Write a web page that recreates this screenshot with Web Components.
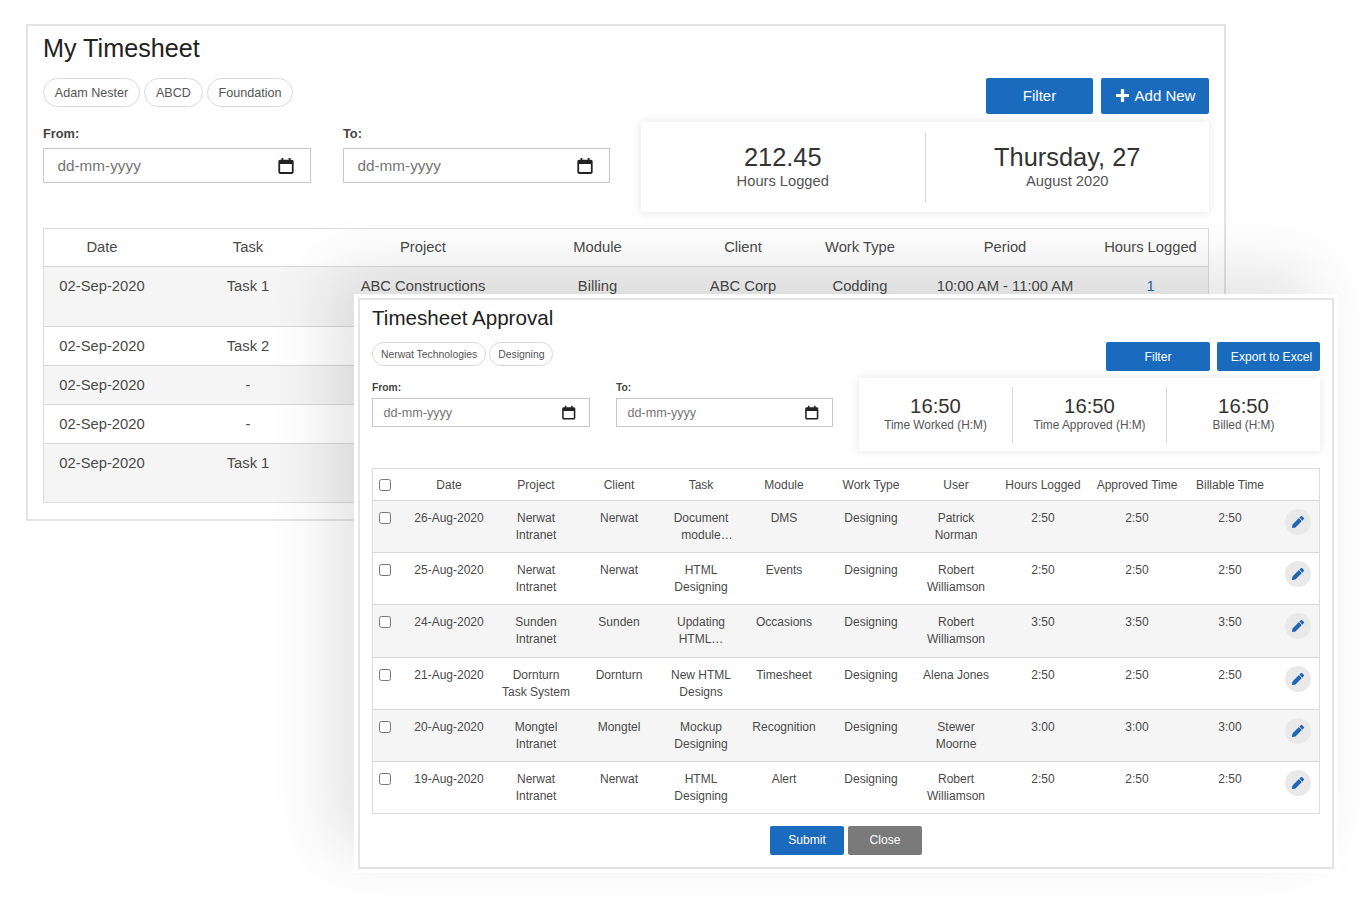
<!DOCTYPE html>
<html lang="en"><head><meta charset="utf-8"><title>Timesheet</title>
<style>
html,body{margin:0;padding:0;background:#fff}
body{width:1366px;height:900px;overflow:hidden;position:relative;font-family:"Liberation Sans",Arial,sans-serif;color:#444}
</style></head><body>

<ts-window style="left:26px;top:24px;width:1200px;height:497px;--pad:15px;--title:25.2px;--title-h:44px;--title-mb:8px;--bw:2px">
  <span slot="title">My Timesheet</span>
  <ts-panel-top style="--right:568px;--mb:16px">
    <ts-chips slot="left" style="--chip-h:29px;--chip-fs:12.6px;--chip-px:10.8px;--gap:4px;--chip-t:1px">
      <ts-chip>Adam Nester</ts-chip><ts-chip>ABCD</ts-chip><ts-chip>Foundation</ts-chip>
    </ts-chips>
    <ts-dates slot="left" style="--gap:32px;--mt:19px">
      <ts-date label="From:" style="--w:268px;--h:35px;--fs:15.3px;--lfs:12.8px;--lmb:6px;--ip:13.5px;--ic:18px;--ir:15px;--lh:16px"></ts-date>
      <ts-date label="To:" style="--w:267px;--h:35px;--fs:15.3px;--lfs:12.8px;--lmb:6px;--ip:13.5px;--ic:18px;--ir:15px;--lh:16px"></ts-date>
    </ts-dates>
    <ts-actions slot="right" style="--gap:8px;--mb:8px">
      <ts-button style="--w:107px;--h:36px;--fs:15px;--bp:2px">Filter</ts-button>
      <ts-button plus style="--w:108px;--h:36px;--fs:15px;--bp:2px">Add New</ts-button>
    </ts-actions>
    <ts-stats slot="right" style="--h:90px;--div:69px;--num:25.4px;--lab:14.7px;--numh:30px;--labh:18px;--sb:2px">
      <ts-stat value="212.45" label="Hours Logged"></ts-stat>
      <ts-stat value="Thursday, 27" label="August 2020"></ts-stat>
    </ts-stats>
  </ts-panel-top>
  <ts-table set="mine" style="--fs:14.75px;--lh:20px;--pt:9px;--hfs:14.75px"></ts-table>
</ts-window>

<ts-window front style="left:354px;top:294px;width:984px;height:579px;--frame:4px;--pad:12px;--title:20.6px;--title-h:36px;--title-mb:6px;--bw:2px">
  <span slot="title">Timesheet Approval</span>
  <ts-panel-top style="--right:461px;--mb:17px">
    <ts-chips slot="left" style="--chip-h:24px;--chip-fs:10.4px;--chip-px:8px;--gap:3px;--chip-t:1px">
      <ts-chip>Nerwat Technologies</ts-chip><ts-chip>Designing</ts-chip>
    </ts-chips>
    <ts-dates slot="left" style="--gap:26px;--mt:14px">
      <ts-date label="From:" style="--w:218px;--h:29px;--fs:12.6px;--lfs:10.3px;--lmb:2px;--ip:10.5px;--ic:15.5px;--ir:12.5px;--lh:16px"></ts-date>
      <ts-date label="To:" style="--w:217px;--h:29px;--fs:12.6px;--lfs:10.3px;--lmb:2px;--ip:10.5px;--ic:15.5px;--ir:12.5px;--lh:16px"></ts-date>
    </ts-dates>
    <ts-actions slot="right" style="--gap:7px;--mb:7px">
      <ts-button style="--w:104px;--h:29px;--fs:12.1px">Filter</ts-button>
      <ts-button style="--w:103px;--h:29px;--fs:12.1px;--pl:6px">Export to Excel</ts-button>
    </ts-actions>
    <ts-stats slot="right" style="--h:73px;--div:56px;--num:20.3px;--lab:11.85px;--numh:25px;--labh:13px;--sb:4px">
      <ts-stat value="16:50" label="Time Worked (H:M)"></ts-stat>
      <ts-stat value="16:50" label="Time Approved (H:M)"></ts-stat>
      <ts-stat value="16:50" label="Billed (H:M)"></ts-stat>
    </ts-stats>
  </ts-panel-top>
  <ts-table set="approval" style="--fs:12px;--lh:17px;--pt:9px;--hfs:12px;--hp:4px"></ts-table>
  <ts-footer>
    <ts-button style="--w:74px;--h:29px;--fs:12.1px">Submit</ts-button>
    <ts-button muted style="--w:74px;--h:29px;--fs:12.1px">Close</ts-button>
  </ts-footer>
</ts-window>

<script>
const el = (name, css, html, init) => {
  customElements.define(name, class extends HTMLElement {
    constructor(){ super(); this.attachShadow({mode:'open'}).innerHTML = `<style>${css}</style>${html}`; }
    connectedCallback(){ if(init) init(this, this.shadowRoot); }
  });
};

el('ts-window', `
  :host{display:block;position:absolute;box-sizing:border-box;padding:var(--frame,0);background:#fff}
  :host([front]){box-shadow:-24px -24px 60px rgba(0,0,0,.11)}
  .box{box-sizing:border-box;height:100%;border:var(--bw) solid #e4e4e4;padding:0 var(--pad);background:#fff}
  .title{height:var(--title-h);line-height:var(--title-h);margin-bottom:var(--title-mb);font-size:var(--title);color:#222}
`, `<div class="box"><div class="title"><slot name="title"></slot></div><slot></slot></div>`);

el('ts-panel-top', `
  :host{display:flex;justify-content:space-between;align-items:flex-start;margin-bottom:var(--mb)}
  .r{width:var(--right);flex:none}
`, `<div><slot name="left"></slot></div><div class="r"><slot name="right"></slot></div>`);

el('ts-chips', `:host{display:flex;gap:var(--gap)}`, `<slot></slot>`);
el('ts-chip', `
  :host{display:block;box-sizing:border-box;height:var(--chip-h);line-height:calc(var(--chip-h) - 2px);padding:var(--chip-t,0) var(--chip-px) 0;
  border:1px solid #d9d9d9;border-radius:15px;font-size:var(--chip-fs);color:#555;white-space:nowrap;background:#fff}
`, `<slot></slot>`);

el('ts-dates', `:host{display:flex;gap:var(--gap);margin-top:var(--mt)}`, `<slot></slot>`);
el('ts-date', `
  :host{display:block;width:var(--w)}
  .l{font-weight:700;font-size:var(--lfs);line-height:var(--lh);margin-bottom:var(--lmb);color:#444}
  .f{box-sizing:border-box;height:var(--h);border:1px solid #c8c8c8;display:flex;align-items:center;justify-content:space-between;
     padding:0 var(--ir) 0 var(--ip);font-size:var(--fs);color:#757575;background:#fff}
  svg{width:var(--ic);height:var(--ic);display:block;flex:none}
`, `<div class="l"></div><div class="f"><span>dd-mm-yyyy</span>
  <svg viewBox="0 0 16 16" aria-hidden="true"><path fill="#222" d="M4 .8h1.6v1.6h4.8V.8H12v1.6h1.2c.9 0 1.6.7 1.6 1.6v9.4c0 .9-.7 1.6-1.6 1.6H2.8c-.9 0-1.6-.7-1.6-1.6V4c0-.9.7-1.6 1.6-1.6H4zM2.8 6.2v7.2h10.4V6.2z"/></svg></div>`,
  (h,s)=>{ s.querySelector('.l').textContent = h.getAttribute('label'); });

el('ts-actions', `:host{display:flex;justify-content:flex-end;gap:var(--gap);margin-bottom:var(--mb)}`, `<slot></slot>`);
el('ts-footer', `:host{display:flex;justify-content:center;gap:4px;margin-top:12px}`, `<slot></slot>`);
el('ts-button', `
  :host{display:flex;align-items:center;justify-content:center;gap:5px;box-sizing:border-box;width:var(--w);height:var(--h);
    padding:0 0 var(--bp,0) var(--pl,0);background:#1a6bbd;color:#fff;font-size:var(--fs);border-radius:2px;white-space:nowrap}
  :host([muted]){background:#7a7a7a}
  svg{display:none;width:15px;height:15px}
  :host([plus]) svg{display:block}
`, `<svg viewBox="0 0 15 15" aria-hidden="true"><path fill="#fff" d="M5.9 1h3.2v4.9H14v3.2H9.1V14H5.9V9.1H1V5.9h4.9z"/></svg><span><slot></slot></span>`);

el('ts-stats', `
  :host{display:flex;align-items:center;box-sizing:border-box;height:var(--h);background:#fff;box-shadow:0 0 9px rgba(0,0,0,.11)}
  ::slotted(ts-stat){flex:1 1 0;height:var(--div)}
  ::slotted(ts-stat:not(:last-child)){border-right:1px solid #d8d8d8}
`, `<slot></slot>`);
el('ts-stat', `
  :host{display:flex;flex-direction:column;align-items:center;justify-content:center;box-sizing:border-box;padding-bottom:var(--sb,0)}
  .n{font-size:var(--num);line-height:var(--numh);color:#333}
  .t{font-size:var(--lab);line-height:var(--labh);color:#555}
`, `<div class="n"></div><div class="t"></div>`,
  (h,s)=>{ s.querySelector('.n').textContent=h.getAttribute('value'); s.querySelector('.t').textContent=h.getAttribute('label'); });

el('ts-check', `
  :host{display:block;height:17px}
  input{display:block;margin:2.5px auto 0;width:12px;height:12px}
`, `<input type="checkbox" tabindex="-1">`);
el('ts-edit', `
  :host{display:flex;align-items:center;justify-content:center;width:26px;height:26px;border-radius:50%;background:#e9e9e9;margin:-1px 0 0 14.5px}
  svg{width:12px;height:12px;display:block}
`, `<svg viewBox="0 0 512 512" aria-hidden="true"><path fill="#1f66b5" d="M497.9 142.1l-46.1 46.1c-4.7 4.7-12.3 4.7-17 0l-111-111c-4.7-4.7-4.7-12.3 0-17l46.1-46.1c18.7-18.7 49.1-18.7 67.9 0l60.1 60.1c18.8 18.7 18.8 49.1 0 67.9zM284.2 99.8L21.6 362.4.4 483.9c-2.9 16.4 11.4 30.6 27.8 27.8l121.5-21.3 262.6-262.6c4.7-4.7 4.7-12.3 0-17l-111-111c-4.8-4.7-12.4-4.7-17.1 0z"/></svg>`);

const approvalRow = (d,p,c,t,m,u,a,b,x,w='Designing') =>
  ['<ts-check></ts-check>',d,p,c,t,m,w,u,a,b,x,'<ts-edit></ts-edit>'];
const sets = {
  mine:{
    cols:[118,174,176,173,118,116,174,117],
    head:['Date','Task','Project','Module','Client','Work Type','Period','Hours Logged'],
    hh:38, heights:[60,39,39,39,59],
    rows:[
      ['02-Sep-2020','Task 1','ABC Constructions','Billing','ABC Corp','Codding','10:00 AM - 11:00 AM','<span style="color:#1a6bbd">1</span>'],
      ['02-Sep-2020','Task 2','','','','','',''],
      ['02-Sep-2020','-','','','','','',''],
      ['02-Sep-2020','-','','','','','',''],
      ['02-Sep-2020','Task 1','','','','','','']
    ]},
  approval:{
    cols:[26,102,72,94,70,96,78,92,82,106,80,50],
    head:['<ts-check></ts-check>','Date','Project','Client','Task','Module','Work Type','User','Hours Logged','Approved Time','Billable Time',''],
    hh:32, heights:[52,52,53,52,52,52],
    rows:[
      approvalRow('26-Aug-2020','Nerwat<br>Intranet','Nerwat','Document<br><span style="padding-left:12px">module…</span>','DMS','Patrick<br>Norman','2:50','2:50','2:50'),
      approvalRow('25-Aug-2020','Nerwat<br>Intranet','Nerwat','HTML<br>Designing','Events','Robert<br>Williamson','2:50','2:50','2:50'),
      approvalRow('24-Aug-2020','Sunden<br>Intranet','Sunden','Updating<br>HTML…','Occasions','Robert<br>Williamson','3:50','3:50','3:50'),
      approvalRow('21-Aug-2020','Dornturn<br>Task System','Dornturn','New HTML<br>Designs','Timesheet','Alena Jones','2:50','2:50','2:50'),
      approvalRow('20-Aug-2020','Mongtel<br>Intranet','Mongtel','Mockup<br>Designing','Recognition','Stewer<br>Moorne','3:00','3:00','3:00'),
      approvalRow('19-Aug-2020','Nerwat<br>Intranet','Nerwat','HTML<br>Designing','Alert','Robert<br>Williamson','2:50','2:50','2:50')
    ]}
};
el('ts-table', `
  :host{display:block}
  table{border-collapse:collapse;table-layout:fixed;width:100%;font-size:var(--fs);line-height:var(--lh);color:#4a4a4a}
  table,th,td{border:0}
  table{outline:1px solid #dcdcdc;outline-offset:-1px}
  th{font-weight:400;font-size:var(--hfs);padding:var(--hp,0) 0 0;vertical-align:middle;border-bottom:1px solid #d6d6d6}
  td{padding:var(--pt) 0 0;text-align:center;vertical-align:top;border-bottom:1px solid #d6d6d6;overflow:visible}
  tbody tr:nth-child(odd){background:#f5f5f5}
`, `<table><colgroup></colgroup><thead><tr></tr></thead><tbody></tbody></table>`,
 (h,s)=>{
   const d = sets[h.getAttribute('set')];
   s.querySelector('colgroup').innerHTML = d.cols.map(w=>`<col style="width:${w}px">`).join('');
   const hr = s.querySelector('thead tr'); hr.style.height = d.hh+'px';
   hr.innerHTML = d.head.map(c=>`<th>${c}</th>`).join('');
   s.querySelector('tbody').innerHTML = d.rows.map((r,i)=>
     `<tr style="height:${d.heights[i]}px">${r.map(c=>`<td>${c}</td>`).join('')}</tr>`).join('');
 });
</script>
</body></html>
